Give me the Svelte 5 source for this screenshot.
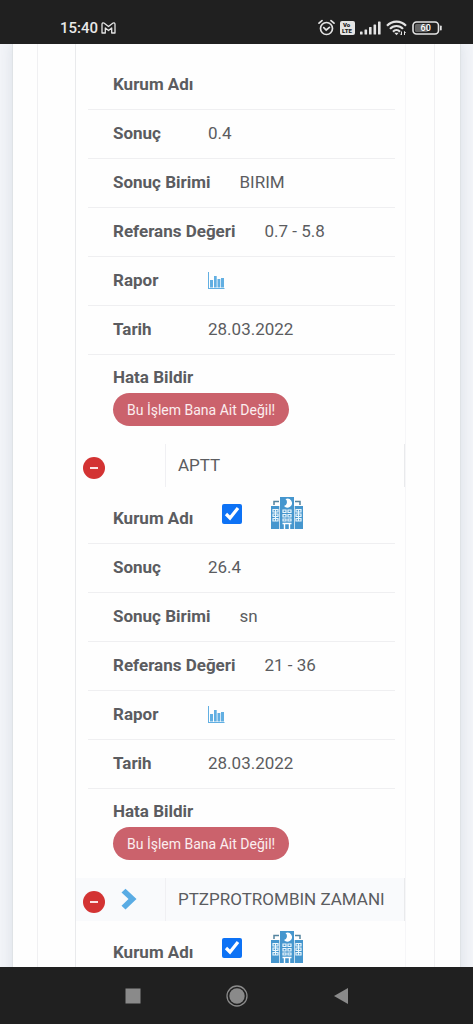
<script>
  // tahlil sonuçları
  let results = [
    {
      id: 1,
      value: "0.4",
      unit: "BIRIM",
      reference: "0.7 - 5.8",
      date: "28.03.2022",
    },
    {
      id: 2,
      name: "APTT",
      institution: true,
      value: "26.4",
      unit: "sn",
      reference: "21 - 36",
      date: "28.03.2022",
    },
    // sonucu henüz yüklenmedi
    {
      id: 3,
      name: "PTZPROTROMBIN ZAMANI",
      chevron: true,
      institution: true,
    },
  ];

  let closed = $state([]);

  function toggle(id) {
    closed = closed.includes(id) ? closed.filter((c) => c !== id) : [...closed, id];
  }
</script>

<div class="screen">
  <header class="status-bar">
    <div class="status-left">
      <span class="clock">15:40</span>
      <svg width="15" height="12" viewBox="0 0 15 12" fill="none" stroke="#e4e4e4" stroke-width="1.3" stroke-linejoin="round">
        <path d="M1 11V2.2C1 .8 2.4.5 3.3 1.2L7.5 4.5 11.7 1.2C12.6.5 14 .8 14 2.2V11H10.7V6L7.5 8.6 4.3 6V11Z" />
      </svg>
    </div>
    <div class="status-right">
      <svg width="17" height="17" viewBox="0 0 17 17" fill="none" stroke="#e4e4e4" stroke-width="1.7" stroke-linecap="round">
        <circle cx="8.5" cy="9.5" r="6" />
        <path d="M1 4.2 4 1.6M16 4.2 13 1.6M5.8 8.7 8.2 11 11.4 8.4" />
      </svg>
      <svg width="15" height="14" viewBox="0 0 15 14">
        <rect width="15" height="14" rx="2" fill="#e4e4e4" />
        <g fill="#202020" font-family="Roboto, sans-serif" font-weight="900" font-size="6">
          <text x="3" y="6">Vo</text>
          <text x="2" y="12">LTE</text>
        </g>
      </svg>
      <svg width="21" height="14" viewBox="0 0 21 14" fill="#e4e4e4">
        <rect x="0" y="10.5" width="2.6" height="3" rx=".6" />
        <rect x="4.5" y="8.5" width="2.6" height="5" rx=".6" />
        <rect x="9" y="6" width="2.6" height="7.5" rx=".6" />
        <rect x="13.5" y="3.5" width="2.6" height="10" rx=".6" />
        <rect x="18" y="0.5" width="2.6" height="13" rx=".6" />
      </svg>
      <svg width="21" height="16" viewBox="0 0 21 16" fill="none" stroke="#e4e4e4" stroke-width="2.1">
        <path d="M1 5.8C6 .2 15 .2 20 5.8M4 8.9C7.5 5 13.5 5 17 8.9M7 11.7C9 9.4 12 9.4 14 11.7" />
        <path d="M8.3 12.8 10.5 15.2 12.7 12.8Z" fill="#e4e4e4" stroke="none" />
        <path d="M15.5 11.5V15M14.3 13.8 15.5 15M18.5 15V11.5M19.7 12.7 18.5 11.5" stroke-width="1" />
      </svg>
      <svg width="30" height="14" viewBox="0 0 30 14">
        <rect x="1" y="1" width="25.5" height="12" rx="3.5" fill="none" stroke="#e4e4e4" stroke-width="1.6" />
        <rect x="3" y="3" width="13" height="8" rx="1.5" fill="#666" />
        <rect x="28" y="4.5" width="1.7" height="5" rx=".8" fill="#e4e4e4" />
        <text x="13.7" y="10.3" text-anchor="middle" fill="#fff" font-family="Roboto, sans-serif" font-weight="500" font-size="9">60</text>
      </svg>
    </div>
  </header>

  <main>
    <div class="card">
      <div class="panel">
        <table>
          <tbody>
            {#each results as item (item.id)}
              {#if item.name}
                <tr class:striped={item.chevron}>
                  <td class="control">
                    <div class="control-inner">
                      <button class="collapse" aria-label="Detay" onclick={() => toggle(item.id)}>
                        <span class="minus"></span>
                      </button>
                      {#if item.chevron}
                        <svg width="16" height="22" viewBox="0 0 16 22" fill="#5aace4">
                          <path d="M0.5 4.5 4.5 0.7 15.5 11 4.5 21.5 0.5 17.7 7.5 11Z" />
                        </svg>
                      {/if}
                    </div>
                  </td>
                  <td class="name">{item.name}</td>
                </tr>
              {/if}
              {#if !closed.includes(item.id)}
                <tr>
                  <td colspan="2">
                    <ul class:first={!item.name}>
                      <li>
                        {#if item.institution}
                          <label class="title" for="kurum-{item.id}">Kurum Adı</label>
                          <input id="kurum-{item.id}" type="checkbox" checked />
                          <svg class="hospital" width="32" height="32" viewBox="0 0 32 32">
                            <path fill="#4596ce" d="M9 0H23V32H9ZM0 9H8.300V32H0ZM23.700 9H32V32H23.700Z" />
                            <path fill="none" stroke="#54849f" stroke-width="1.5" d="M3 8V4.500H8M29 8V4.500H24" />
                            <path fill="#fff" d="M14.500 2A4.500 4.500 0 1 1 13 9 4 4 0 0 0 14.500 2Z" />
                            <path
                              fill="none"
                              stroke="#e9f6fc"
                              stroke-width="1.2"
                              d="M2 12.500H7V15H2ZM2 17H7V19.500H2ZM2 21.500H7V24H2ZM4.500 12.500V24M25 12.500H30V15H25ZM25 17H30V19.500H25ZM25 21.500H30V24H25ZM27.500 12.500V24"
                            />
                            <path
                              fill="none"
                              stroke="#e9f6fc"
                              stroke-width="1.2"
                              d="M12 13H15V15.500H12ZM17 13H20V15.500H17ZM12 17.500H15V20H12ZM17 17.500H20V20H17ZM12 22H15V24H12ZM17 22H20V24H17Z"
                            />
                            <path fill="none" stroke="#fff" stroke-width="1.4" d="M11.500 26.500H20.500M13.500 32V27M18.500 32V27" />
                          </svg>
                        {:else}
                          <span class="title">Kurum Adı</span>
                        {/if}
                      </li>
                      {#if item.value}
                        <li><span class="title">Sonuç</span><span>{item.value}</span></li>
                        <li><span class="title">Sonuç Birimi</span><span>{item.unit}</span></li>
                        <li><span class="title">Referans Değeri</span><span>{item.reference}</span></li>
                        <li>
                          <span class="title">Rapor</span>
                          <a href="#rapor" aria-label="Rapor">
                            <svg width="17" height="17" viewBox="0 0 17 17" fill="#62afe2">
                              <path d="M0 0H1V16H16.5V17H0Z" />
                              <path d="M2 8H5V15.5H2ZM6 4H8.7V15.5H6ZM9.500 7H12.300V15.5H9.500ZM13 6H16V15.5H13Z" />
                            </svg>
                          </a>
                        </li>
                        <li><span class="title">Tarih</span><span>{item.date}</span></li>
                        <li class="report">
                          <span class="title">Hata Bildir</span>
                          <button class="btn-danger">Bu İşlem Bana Ait Değil!</button>
                        </li>
                      {/if}
                    </ul>
                  </td>
                </tr>
              {/if}
            {/each}
          </tbody>
        </table>
      </div>
    </div>
  </main>

  <nav class="nav-bar">
    <button aria-label="Son uygulamalar">
      <svg width="22" height="22" viewBox="0 0 22 22"><rect x="3.5" y="3.5" width="15" height="15" fill="#8a8a8a" /></svg>
    </button>
    <button aria-label="Ana ekran">
      <svg width="22" height="22" viewBox="0 0 22 22">
        <circle cx="11" cy="11" r="10" fill="none" stroke="#8a8a8a" stroke-width="1.3" />
        <circle cx="11" cy="11" r="7.7" fill="#8a8a8a" />
      </svg>
    </button>
    <button aria-label="Geri">
      <svg width="22" height="22" viewBox="0 0 22 22"><path d="M4 11 18 3V19Z" fill="#8a8a8a" /></svg>
    </button>
  </nav>
</div>

<style>
  .screen {
    display: flex;
    flex-direction: column;
    height: 100vh;
    font-family: Roboto, "Liberation Sans", sans-serif;
    font-size: 17px;
    line-height: 24px;
    color: #5b5c60;
    background: #f2f4f8;
  }

  button {
    font-family: inherit;
    border: none;
    cursor: pointer;
  }

  svg {
    display: block;
  }

  /* durum çubuğu */
  .status-bar {
    display: flex;
    justify-content: space-between;
    align-items: center;
    flex: none;
    height: 44px;
    box-sizing: border-box;
    padding: 11px 31px 0 60px;
    background: #202020;
    color: #e8e8e8;
  }

  .status-left {
    display: flex;
    align-items: center;
    gap: 3px;
  }

  .clock {
    font-size: 15px;
    line-height: 20px;
    font-weight: 500;
  }

  .status-right {
    display: flex;
    align-items: center;
    gap: 5px;
  }

  main {
    flex: 1;
    min-height: 0;
    overflow-y: auto;
    scrollbar-width: none;
    padding: 0 12px;
  }

  .card {
    padding: 0 25px 0 24px;
    background: #fefefe;
    border-left: 1px solid #dfe3e6;
    border-right: 1px solid #dfe3e6;
    box-shadow: 0 0 12px rgba(60, 80, 110, 0.12);
  }

  .panel {
    padding: 0 28px 0 37px;
    border-left: 1px solid #f0f0f2;
    border-right: 1px solid #f0f0f2;
  }

  table {
    width: 100%;
    border-collapse: separate;
    border-spacing: 0;
    border-left: 1px solid #e9eaec;
    border-right: 1px solid #f6f6f8;
  }

  td {
    padding: 0;
  }

  .striped {
    background: #f9fafc;
  }

  .control {
    width: 90px;
    box-sizing: border-box;
    height: 43px;
    border-right: 1px solid #f0f0f3;
  }

  .control-inner {
    display: flex;
    align-items: center;
    gap: 16px;
    padding: 0 0 2px 7px;
  }

  .collapse {
    display: flex;
    align-items: center;
    justify-content: center;
    width: 22px;
    height: 22px;
    margin-top: 6px;
    padding: 0;
    border-radius: 50%;
    background: #d33333;
  }

  .minus {
    width: 8px;
    height: 2px;
    background: #fbe3e3;
  }

  .name {
    padding: 0 0 2px 12px;
    border-right: 1px solid #e9eaec;
  }

  ul {
    list-style: none;
    margin: 0;
    padding: 8px 10px 0 12px;
  }

  .first {
    padding-top: 17px;
  }

  li {
    display: flex;
    align-items: center;
    gap: 29px;
    box-sizing: border-box;
    height: 49px;
    padding: 0 0 2px 25px;
    border-bottom: 1px solid #efeff1;
  }

  .title {
    min-width: 66px;
    font-weight: 700;
  }

  input {
    width: 20px;
    height: 20px;
    margin: 0 0 8px;
    accent-color: #0d72f5;
  }

  .hospital {
    margin-bottom: 10px;
  }

  .report {
    flex-direction: column;
    align-items: flex-start;
    gap: 4px;
    height: auto;
    padding-top: 10px;
    padding-bottom: 18px;
    border-bottom: none;
  }

  .btn-danger {
    height: 33px;
    padding: 0 14px;
    border-radius: 17px;
    background: #cb626c;
    color: #fbeeef;
    font-size: 14px;
  }

  /* android alt çubuğu */
  .nav-bar {
    display: flex;
    justify-content: center;
    align-items: center;
    flex: none;
    gap: 82px;
    height: 57px;
    background: #202020;
  }

  .nav-bar button {
    padding: 0;
    background: none;
  }
</style>
